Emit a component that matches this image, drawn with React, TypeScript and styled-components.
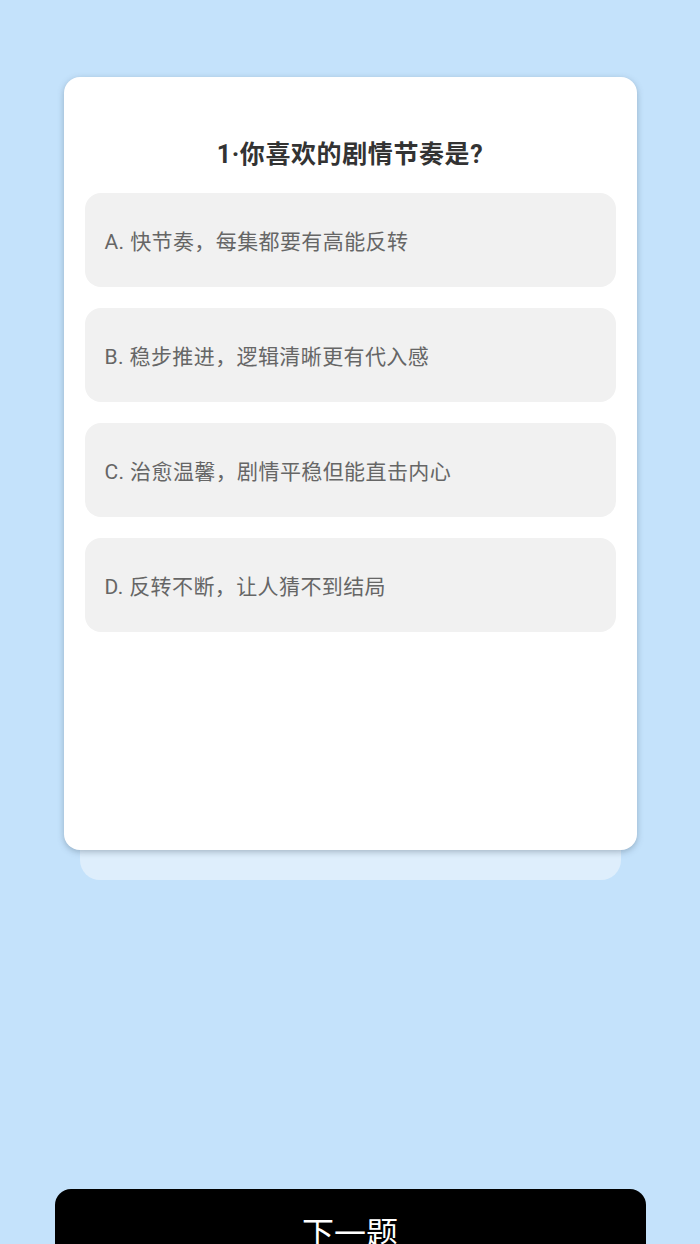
import React from "react";
import styled, { createGlobalStyle } from "styled-components";

const options = [
  "A. 快节奏，每集都要有高能反转",
  "B. 稳步推进，逻辑清晰更有代入感",
  "C. 治愈温馨，剧情平稳但能直击内心",
  "D. 反转不断，让人猜不到结局",
];

const App = () => {
  return (
    <Page>
      <GlobalStyle />
      <Stack>
        <Card>
          <Title>1·你喜欢的剧情节奏是?</Title>
          <List>
            {options.map((o) => (
              <Option key={o}>{o}</Option>
            ))}
          </List>
        </Card>
      </Stack>
      <NextButton>下一题</NextButton>
    </Page>
  );
};

export default App;

const GlobalStyle = createGlobalStyle`
  html, body {
    margin: 0;
    padding: 0;
    background: #c4e2fb;
    font-family: Roboto, "Noto Sans CJK SC", sans-serif;
  }
`;

const Page = styled.div`
  width: 700px;
  height: 1244px;
  overflow: hidden;
  box-sizing: border-box;
  padding-top: 77px;
  display: flex;
  flex-direction: column;
  align-items: center;
  background: #c4e2fb;
`;

const Stack = styled.div`
  position: relative;
  flex-shrink: 0;
  width: 573px;

  &::after {
    content: "";
    position: absolute;
    left: 16px;
    right: 16px;
    bottom: -30px;
    height: 60px;
    background: #deeefc;
    border-radius: 0 0 20px 20px;
    z-index: 0;
  }
`;

const Card = styled.div`
  position: relative;
  z-index: 1;
  height: 773px;
  box-sizing: border-box;
  padding: 58px 21px 0;
  background: #ffffff;
  border-radius: 16px;
  box-shadow: 0 2px 6px rgba(60, 80, 100, 0.35);
`;

const Title = styled.div`
  text-align: center;
  font-size: 25px;
  font-weight: 700;
  color: #333333;
  line-height: 40px;
  margin-bottom: 18px;
  letter-spacing: 0.6px;
`;

const List = styled.div`
  display: flex;
  flex-direction: column;
  gap: 21px;
`;

const Option = styled.div`
  height: 94px;
  display: flex;
  align-items: center;
  padding: 0 20px;
  background: #f1f1f1;
  border-radius: 16px;
  font-size: 21px;
  letter-spacing: 0.4px;
  color: #666666;
`;

const NextButton = styled.button`
  margin-top: 339px;
  flex-shrink: 0;
  width: 591px;
  height: 84px;
  border: none;
  border-radius: 16px;
  background: #000000;
  color: #ffffff;
  font-family: inherit;
  font-size: 32px;
  padding: 0;
  cursor: pointer;
`;
